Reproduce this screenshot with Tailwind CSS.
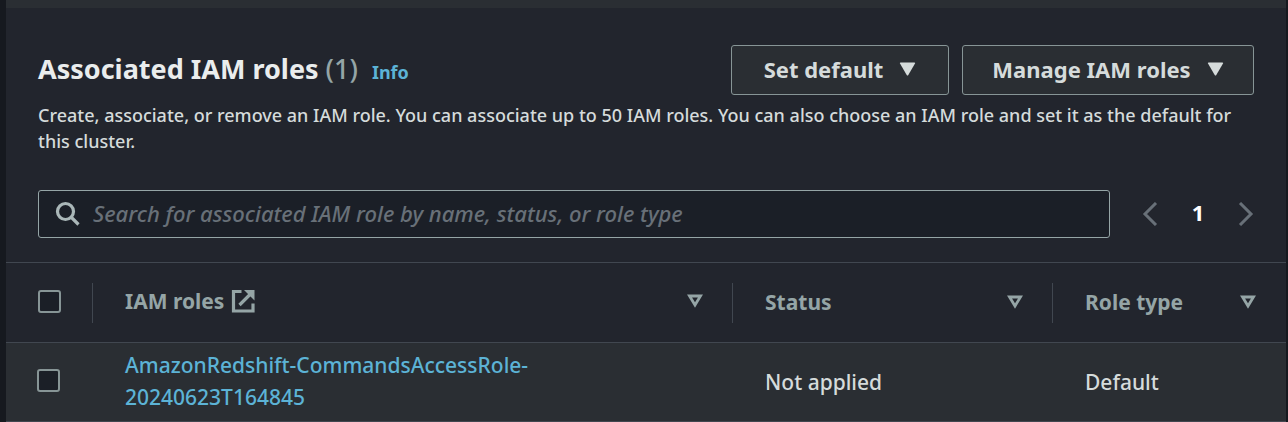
<!DOCTYPE html>
<html lang="en">
<head>
<meta charset="utf-8">
<meta name="viewport" content="width=device-width, initial-scale=1">
<title>Associated IAM roles</title>
<script src="https://cdn.jsdelivr.net/npm/@tailwindcss/browser@4"></script>
</head>
<body class="min-h-screen overflow-x-hidden bg-[#16191f] pl-[6px] pr-[2px] font-['Noto_Sans','Open_Sans',sans-serif] text-[#d5dbdb]">
<main class="bg-[#22252d]">
  <div class="h-2 bg-[#2a2e33]"></div>
  <header class="px-8 pt-[37px]">
    <div class="flex items-start justify-between">
      <div class="flex items-baseline gap-[14px] pt-1">
        <h2 class="text-[27px] leading-10 font-bold text-[#eaeded]">Associated IAM roles <span class="font-medium text-[#95a5a6]">(1)</span></h2>
        <a href="#" class="text-[18px] font-bold text-[#5cb3d6]">Info</a>
      </div>
      <div class="flex gap-[13px]">
        <button type="button" class="flex h-[50px] w-[218px] items-center justify-center gap-4 rounded-[3px] border border-[#879596] bg-[#2a2e33] pb-0.5 text-[22px] font-bold">Set default
          <svg class="h-[14px] w-[17px]" viewBox="0 0 17 14" fill="currentColor" aria-hidden="true"><path d="M1.500 .5h14q1 0 .5 1L9.300 13q-.8 1.200-1.600 0L1 1.500q-.5-1 .5-1z"/></svg>
        </button>
        <button type="button" class="flex h-[50px] w-[292px] items-center justify-center gap-4 rounded-[3px] border border-[#879596] bg-[#2a2e33] pb-0.5 text-[22px] font-bold">Manage IAM roles
          <svg class="h-[14px] w-[17px]" viewBox="0 0 17 14" fill="currentColor" aria-hidden="true"><path d="M1.500 .5h14q1 0 .5 1L9.300 13q-.8 1.200-1.600 0L1 1.500q-.5-1 .5-1z"/></svg>
        </button>
      </div>
    </div>
    <p class="mt-[7px] text-[18px] leading-[26px] font-medium">Create, associate, or remove an IAM role. You can associate up to 50 IAM roles. You can also choose an IAM role and set it as the default for this cluster.</p>
  </header>
  <div class="flex items-center px-8 pt-9 pb-6">
    <label class="flex h-12 flex-1 items-center gap-3 rounded-[3px] border border-[#95a5a6] bg-[#1b1f27] px-4">
      <svg class="size-[26px] shrink-0 text-[#aab7b8]" viewBox="0 0 26 26" fill="none" stroke="currentColor" stroke-width="3.200" aria-hidden="true"><circle cx="10.500" cy="10.500" r="8"/><path d="M16 16l7.500 7.500"/></svg>
      <input type="text" aria-label="Search associated IAM roles" placeholder="Search for associated IAM role by name, status, or role type" class="min-w-0 flex-1 bg-transparent pb-0.5 text-[22px] font-medium italic outline-none placeholder:text-[#687078]">
    </label>
    <nav aria-label="Pagination" class="ml-8 flex w-[112px] items-center justify-between text-[#687078]">
      <button type="button" aria-label="Previous page"><svg class="h-6 w-4" viewBox="0 0 16 24" fill="none" stroke="currentColor" stroke-width="3"><path d="M14 1L3 12l11 11"/></svg></button>
      <button type="button" aria-current="page" class="pb-1 text-[22px] font-bold text-white">1</button>
      <button type="button" aria-label="Next page"><svg class="h-6 w-4" viewBox="0 0 16 24" fill="none" stroke="currentColor" stroke-width="3"><path d="M2 1l11 11L2 23"/></svg></button>
    </nav>
  </div>
  <table class="w-full table-fixed border-collapse text-left text-[21px] leading-8 font-medium">
    <colgroup><col class="w-[87px]"><col class="w-1/2"><col class="w-1/4"><col></colgroup>
    <thead>
      <tr class="h-20 border-t border-[#414750] text-[#95a5a6]">
        <th class="p-0"><div class="flex h-10 items-center border-r border-[#414750] pb-0.5 pl-8"><input type="checkbox" aria-label="Select all roles" class="size-[23px] appearance-none rounded-[3px] border-2 border-[#879596] bg-[#1b1f27] checked:bg-[#5cb3d6]"></div></th>
        <th class="p-0"><div class="flex h-10 items-center border-r border-[#414750] pr-[29px] pb-1 pl-8">
          <span>IAM roles</span>
          <svg class="ml-[7px] size-6" viewBox="0 0 24 24" fill="none" stroke="currentColor" stroke-width="3.200" aria-hidden="true"><path d="M10.500 2.500h-8v19.500h19.500v-7.500M8.500 16L19 5.500"/><path d="M13 1h10.500v10.500z" fill="currentColor" stroke="none"/></svg>
          <button type="button" aria-label="Sort by IAM roles" class="ml-auto"><svg class="h-[14px] w-4" viewBox="0 0 16 14" fill="none" stroke="currentColor" stroke-width="2.800"><path d="M2.500 2h11L8 11z"/></svg></button>
        </div></th>
        <th class="p-0"><div class="flex h-10 items-center justify-between border-r border-[#414750] pr-[29px] pb-0.5 pl-8">Status
          <button type="button" aria-label="Sort by status"><svg class="h-[14px] w-4" viewBox="0 0 16 14" fill="none" stroke="currentColor" stroke-width="2.800"><path d="M2.500 2h11L8 11z"/></svg></button>
        </div></th>
        <th class="p-0"><div class="flex h-10 items-center justify-between pr-[30px] pb-0.5 pl-8">Role type
          <button type="button" aria-label="Sort by role type"><svg class="h-[14px] w-4" viewBox="0 0 16 14" fill="none" stroke="currentColor" stroke-width="2.800"><path d="M2.500 2h11L8 11z"/></svg></button>
        </div></th>
      </tr>
    </thead>
    <tbody>
      <tr class="h-[79px] border-y border-[#414750] bg-[#2a2e33]">
        <td class="p-0 pb-1 pl-[31px]"><input type="checkbox" aria-label="Select AmazonRedshift-CommandsAccessRole-20240623T164845" class="block size-[23px] appearance-none rounded-[3px] border-2 border-[#879596] bg-[#1b1f27] checked:bg-[#5cb3d6]"></td>
        <td class="p-0 pb-0.5 pl-8"><a href="#" class="text-[#5cb3d6]">AmazonRedshift-CommandsAccessRole-<br>20240623T164845</a></td>
        <td class="p-0 pl-8">Not applied</td>
        <td class="p-0 pl-8">Default</td>
      </tr>
    </tbody>
  </table>
</main>
</body>
</html>
